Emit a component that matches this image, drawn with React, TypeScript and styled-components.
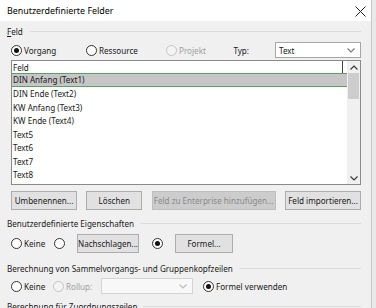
import styled, { createGlobalStyle } from 'styled-components';
import { FC } from 'react';

const GlobalStyle = createGlobalStyle`
  body {
    margin: 0;
    background: #e9e9e9;
    font-family: "Noto Sans", "Open Sans", sans-serif;
    font-size: 8.1px;
    color: #1a1a1a;
  }
`

const fields = [
  'DIN Anfang (Text1)',
  'DIN Ende (Text2)',
  'KW Anfang (Text3)',
  'KW Ende (Text4)',
  'Text5',
  'Text6',
  'Text7',
  'Text8',
  'Text9',
]

type RadioProps = {
  checked?: boolean
  disabled?: boolean
  label?: string
  w?: number
}

const Radio: FC<RadioProps> = ({checked, disabled, label, w}) => {
  return (
    <RadioWrap $disabled={disabled} $w={w}>
      <Circle $disabled={disabled}>{checked && <Dot/>}</Circle>
      {label && <span>{label}</span>}
    </RadioWrap>
  )
}

const Chevron: FC<{up?: boolean, color?: string}> = ({up, color = '#555'}) => (
  <svg width="8" height="5" viewBox="0 0 8 5">
    <path d={up ? 'M0.5 4.5 L4 1 L7.5 4.5' : 'M0.5 0.5 L4 4 L7.5 0.5'} fill="none" stroke={color} strokeWidth="1.1"/>
  </svg>
)

export default function App() {
  return (
    <Window>
      <GlobalStyle/>
      <TitleBar>
        <Title>Benutzerdefinierte Felder</Title>
        <Close>
          <svg width="11" height="11" viewBox="0 0 11 11">
            <path d="M0.5 0.5 L10.5 10.5 M10.5 0.5 L0.5 10.5" stroke="#222" strokeWidth="1"/>
          </svg>
        </Close>
      </TitleBar>
      <Body>
        <GroupLabel><span><u>F</u>eld</span></GroupLabel>
        <TopRow>
          <Radio checked label="Vorgang" w={75}/>
          <Radio label="Ressource" w={80}/>
          <Radio disabled label="Projekt"/>
          <TypLabel>Typ:</TypLabel>
          <Select>
            <span>Text</span>
            <Chevron color="#777"/>
          </Select>
        </TopRow>
        <ListBox>
          <ListMain>
            <HeaderRow><HeaderCell>Feld</HeaderCell></HeaderRow>
            {fields.map((f, i) => (
              <Row key={f} $selected={i === 0}>{f}</Row>
            ))}
          </ListMain>
          <ScrollBar>
            <Arrow><Chevron up color="#333"/></Arrow>
            <Thumb/>
            <TrackFill/>
            <Arrow><Chevron color="#333"/></Arrow>
          </ScrollBar>
        </ListBox>
        <ButtonRow>
          <Button $w={66}>Umbenennen...</Button>
          <Button $w={56}>Löschen</Button>
          <Button $w={124} disabled>Feld zu Enterprise hinzufügen...</Button>
          <Button $w={76}>Feld importieren...</Button>
        </ButtonRow>
        <GroupLabel $mt={6}><span>Benutzerdefinierte Eigenschaften</span></GroupLabel>
        <PropRow>
          <Radio label="Keine" w={43}/>
          <Radio w={23}/>
          <Button $w={62}>Nachschlagen...</Button>
          <Spacer $w={13}/>
          <Radio w={23} checked/>
          <Button $w={58}>Formel...</Button>
        </PropRow>
        <GroupLabel $mt={8}><span>Berechnung von Sammelvorgangs- und Gruppenkopfzeilen</span></GroupLabel>
        <CalcRow>
          <Radio label="Keine" w={42}/>
          <Radio disabled label="Rollup:" w={48}/>
          <Select $disabled $w={92}>
            <span/>
            <Chevron color="#bbb"/>
          </Select>
          <Spacer $w={10}/>
          <Radio checked label="Formel verwenden"/>
        </CalcRow>
        <GroupLabel $mt={5}><span>Berechnung für Zuordnungszeilen</span></GroupLabel>
      </Body>
    </Window>
  );
}

const Window = styled.div`
  width: 371px;
  height: 308px;
  background: #f0f0f0;
  border-right: 1px solid #c8c8c8;
  overflow: hidden;
`

const TitleBar = styled.div`
  height: 21px;
  background: #ffffff;
  display: flex;
  align-items: center;
  justify-content: space-between;
  padding: 0 5px 0 7px;
`

const Title = styled.div`
  font-size: 8.9px;
  color: #000;
`

const Close = styled.div`
  display: flex;
  margin-top: 1px;
`

const Body = styled.div`
  padding: 3px 10px 0 7px;
  display: flex;
  flex-direction: column;
`

const GroupLabel = styled.div<{$mt?: number}>`
  display: flex;
  align-items: center;
  gap: 6px;
  height: 14px;
  flex: none;
  margin-top: ${p => p.$mt ?? 0}px;
  white-space: nowrap;

  &::after {
    content: '';
    flex: 1;
    height: 1px;
    background: #dcdcdc;
  }

  u {
    text-decoration-thickness: 1px;
    text-underline-offset: 1px;
  }
`

const TopRow = styled.div`
  display: flex;
  align-items: center;
  height: 16px;
  flex: none;
  margin: 4px 0 2px 4px;
`

const Spacer = styled.div<{$w: number}>`
  width: ${p => p.$w}px;
  flex: none;
`

const RadioWrap = styled.label<{$disabled?: boolean, $w?: number}>`
  display: flex;
  align-items: center;
  gap: 2px;
  flex: none;
  width: ${p => p.$w ? `${p.$w}px` : 'auto'};
  color: ${p => p.$disabled ? '#a0a0a0' : '#1a1a1a'};
  white-space: nowrap;
`

const Circle = styled.span<{$disabled?: boolean}>`
  width: 11px;
  height: 11px;
  box-sizing: border-box;
  border-radius: 50%;
  border: 1px solid ${p => p.$disabled ? '#c4c4c4' : '#333'};
  background: ${p => p.$disabled ? '#f4f4f4' : '#fff'};
  display: flex;
  align-items: center;
  justify-content: center;
  flex: none;
`

const Dot = styled.span`
  width: 5px;
  height: 5px;
  border-radius: 50%;
  background: #111;
`

const TypLabel = styled.span`
  margin-left: auto;
  margin-right: 26px;
`

const Select = styled.div<{$disabled?: boolean, $w?: number}>`
  width: ${p => p.$w ?? 86}px;
  height: 16px;
  box-sizing: border-box;
  border: 1px solid ${p => p.$disabled ? '#d4d4d4' : '#a6a6a6'};
  background: ${p => p.$disabled ? '#f8f8f8' : '#fff'};
  display: flex;
  align-items: center;
  justify-content: space-between;
  padding: 0 5px 0 3px;
  flex: none;
`

const ListBox = styled.div`
  margin-left: 4px;
  height: 125px;
  flex: none;
  box-sizing: border-box;
  border: 1px solid #8a8a8a;
  background: #fff;
  display: flex;
  overflow: hidden;
`

const ListMain = styled.div`
  flex: 1;
  display: flex;
  flex-direction: column;
  min-width: 0;
`

const HeaderRow = styled.div`
  height: 12px;
  flex: none;
  display: flex;
  padding-right: 4px;
`

const HeaderCell = styled.div`
  flex: 1;
  border-right: 1px solid #444;
  padding-left: 1px;
  line-height: 13px;
`

const Row = styled.div<{$selected?: boolean}>`
  height: 14px;
  flex: none;
  box-sizing: border-box;
  line-height: 12px;
  padding-left: 1px;
  white-space: nowrap;
  background: ${p => p.$selected ? '#c6c6c6' : 'transparent'};
  border-top: 1px solid ${p => p.$selected ? '#5f9f5f' : 'transparent'};
  border-bottom: 1px solid ${p => p.$selected ? '#5f9f5f' : 'transparent'};

  & + & {
    height: 13.5px;
  }
`

const ScrollBar = styled.div`
  width: 13px;
  flex: none;
  background: #f0f0f0;
  display: flex;
  flex-direction: column;
`

const Arrow = styled.div`
  height: 12px;
  display: flex;
  align-items: center;
  justify-content: center;
  flex: none;
`

const Thumb = styled.div`
  height: 26px;
  margin: 0 1px;
  background: #cdcdcd;
  flex: none;
`

const TrackFill = styled.div`
  flex: 1;
`

const ButtonRow = styled.div`
  display: flex;
  justify-content: space-between;
  flex: none;
  margin: 6px 0 0 4px;
`

const Button = styled.button<{$w: number}>`
  width: ${p => p.$w}px;
  height: 19px;
  box-sizing: border-box;
  border: 1px solid #adadad;
  background: #e1e1e1;
  font: inherit;
  color: #1a1a1a;
  padding: 0;
  white-space: nowrap;
  flex: none;

  &:disabled {
    background: #cccccc;
    border-color: #bfbfbf;
    color: #8a8a8a;
  }
`

const PropRow = styled.div`
  display: flex;
  align-items: center;
  height: 19px;
  flex: none;
  margin: 4px 0 0 4px;
`

const CalcRow = styled.div`
  display: flex;
  align-items: center;
  height: 16px;
  flex: none;
  margin: 3px 0 0 4px;
`
